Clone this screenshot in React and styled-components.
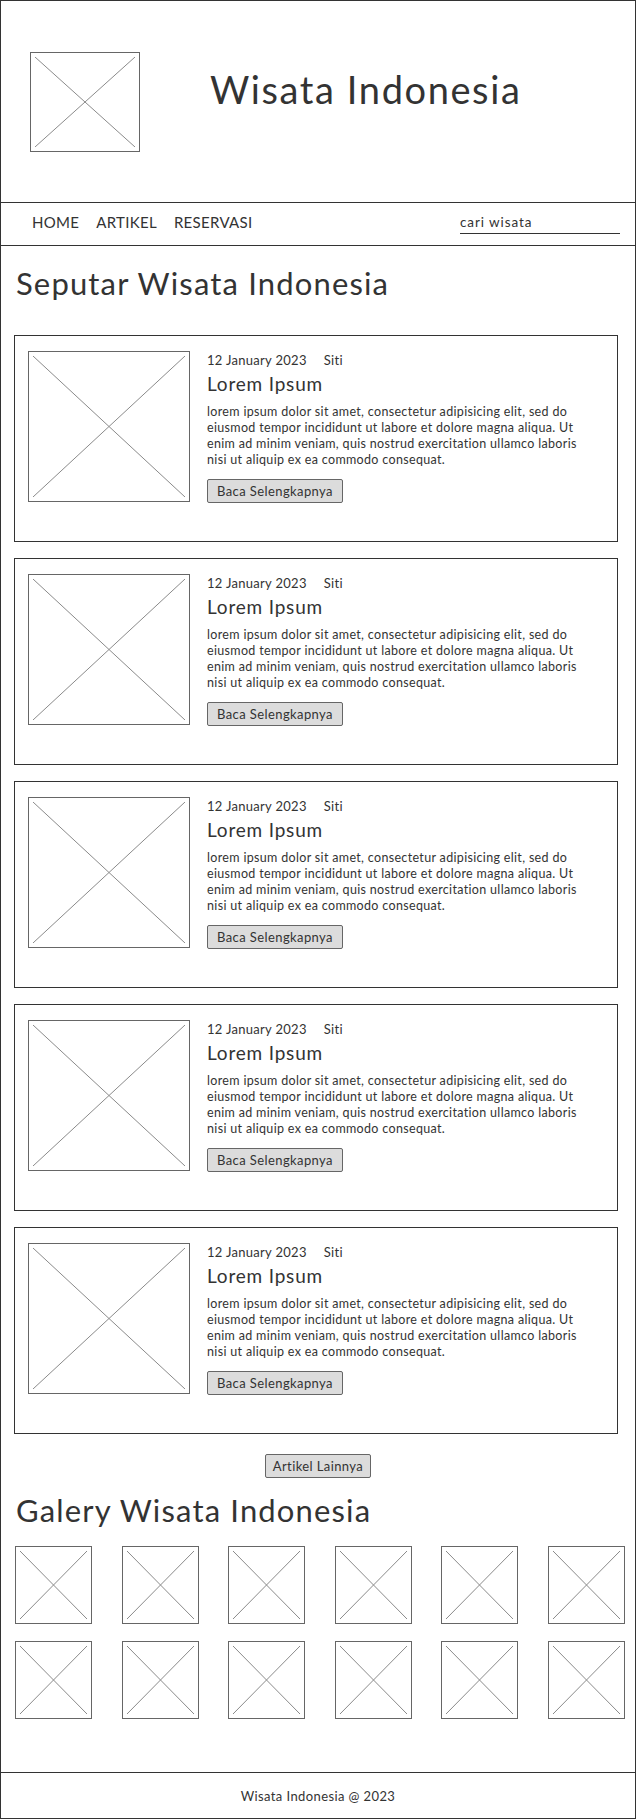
import React from "react";
import styled, { createGlobalStyle } from "styled-components";

const GlobalStyle = createGlobalStyle`
  html, body { margin: 0; padding: 0; background: #fff; }
  body { font-family: Lato, "Open Sans", sans-serif; color: #333; }
  * { box-sizing: border-box; }
`;

const Page = styled.div`
  width: 636px;
  min-height: 1819px;
  border: 1px solid #333;
  display: flex;
  flex-direction: column;
`;

const PlaceholderBox = styled.div`
  width: ${(p) => p.$w}px;
  height: ${(p) => p.$h}px;
  flex: none;
  border: 1px solid #666;
  padding: ${(p) => p.$inset ?? 4}px;
  background: #fff;
  svg { display: block; width: 100%; height: 100%; }
`;

const Placeholder = ({ w, h, inset }) => (
  <PlaceholderBox $w={w} $h={h} $inset={inset}>
    <svg viewBox="0 0 100 100" preserveAspectRatio="none">
      <line x1="0" y1="0" x2="100" y2="100" stroke="#8a8a8a" strokeWidth="1" vectorEffect="non-scaling-stroke" />
      <line x1="100" y1="0" x2="0" y2="100" stroke="#8a8a8a" strokeWidth="1" vectorEffect="non-scaling-stroke" />
    </svg>
  </PlaceholderBox>
);

const Header = styled.header`
  height: 202px;
  border-bottom: 1px solid #333;
  display: flex;
  align-items: center;
  padding-left: 29px;
`;

const SiteTitle = styled.h1`
  margin: 0 0 24px 70px;
  font-size: 38px;
  font-weight: 400;
  line-height: 1.2;
  letter-spacing: 1.6px;
  color: #333;
`;

const Nav = styled.nav`
  height: 43px;
  border-bottom: 1px solid #333;
  display: flex;
  align-items: center;
  justify-content: space-between;
  padding: 0 15px 4px 31px;
`;

const NavLinks = styled.div`
  display: flex;
  gap: 17px;
`;

const NavLink = styled.a`
  font-size: 15px;
  line-height: 1.2;
  letter-spacing: 0.3px;
  color: #333;
  text-decoration: none;
`;

const Search = styled.div`
  width: 160px;
  font-size: 13.5px;
  line-height: 16px;
  letter-spacing: 0.9px;
  padding: 4px 0 3px;
  border-bottom: 1px solid #333;
  color: #333;
`;

const Main = styled.main`
  padding: 0 17px 0 13px;
  display: flex;
  flex-direction: column;
`;

const SectionTitle = styled.h2`
  margin: ${(p) => p.$mt}px 0 ${(p) => p.$mb}px 2px;
  font-size: 31px;
  font-weight: 400;
  line-height: 37px;
  letter-spacing: 1.15px;
  color: #333;
`;

const CardList = styled.div`
  display: flex;
  flex-direction: column;
  gap: 16px;
`;

const Card = styled.article`
  height: 207px;
  border: 1px solid #333;
  padding: 15px 13px;
  display: flex;
  gap: 17px;
`;

const CardBody = styled.div`
  display: flex;
  flex-direction: column;
  align-items: flex-start;
`;

const Meta = styled.div`
  margin-top: 1px;
  font-size: 13px;
  line-height: 16px;
  letter-spacing: 0.3px;
  display: flex;
  gap: 17px;
`;

const CardTitle = styled.h3`
  margin: 5px 0 0;
  font-size: 19px;
  font-weight: 400;
  line-height: 22px;
  letter-spacing: 0.8px;
`;

const Excerpt = styled.p`
  margin: 9px 0 0;
  font-size: 12.5px;
  line-height: 16px;
  letter-spacing: 0.33px;
  white-space: nowrap;
`;

const Button = styled.button`
  height: 24px;
  width: ${(p) => p.$w}px;
  margin-top: ${(p) => p.$mt ?? 0}px;
  padding: 0;
  border: 1px solid #666;
  border-radius: 2px;
  background: #dcdcdc;
  font-family: inherit;
  font-size: 13px;
  letter-spacing: 0.4px;
  color: #333;
  cursor: pointer;
`;

const CenterRow = styled.div`
  display: flex;
  justify-content: center;
  margin-top: 20px;
  padding-left: 4px;
`;

const Gallery = styled.div`
  width: 610px;
  margin-left: 1px;
  display: grid;
  grid-template-columns: repeat(6, 77px);
  justify-content: space-between;
  row-gap: 17px;
`;

const Footer = styled.footer`
  margin-top: auto;
  height: 46px;
  border-top: 1px solid #333;
  display: flex;
  align-items: center;
  justify-content: center;
  font-size: 13px;
  letter-spacing: 0.4px;
  color: #333;
`;

const Spacer = styled.div`
  height: 52px;
`;

const excerptLines = [
  "lorem ipsum dolor sit amet, consectetur adipisicing elit, sed do",
  "eiusmod tempor incididunt ut labore et dolore magna aliqua. Ut",
  "enim ad minim veniam, quis nostrud exercitation ullamco laboris",
  "nisi ut aliquip ex ea commodo consequat.",
];

const ArticleCard = () => (
  <Card>
    <Placeholder w={162} h={151} inset={4} />
    <CardBody>
      <Meta>
        <span>12 January 2023</span>
        <span>Siti</span>
      </Meta>
      <CardTitle>Lorem Ipsum</CardTitle>
      <Excerpt>
        {excerptLines.map((l, i) => (
          <React.Fragment key={i}>
            {l}
            {i < excerptLines.length - 1 && <br />}
          </React.Fragment>
        ))}
      </Excerpt>
      <Button $w={136} $mt={11}>Baca Selengkapnya</Button>
    </CardBody>
  </Card>
);

export default function App() {
  return (
    <>
      <GlobalStyle />
      <Page>
        <Header>
          <Placeholder w={110} h={100} inset={4} />
          <SiteTitle>Wisata Indonesia</SiteTitle>
        </Header>
        <Nav>
          <NavLinks>
            <NavLink href="#">HOME</NavLink>
            <NavLink href="#">ARTIKEL</NavLink>
            <NavLink href="#">RESERVASI</NavLink>
          </NavLinks>
          <Search>cari wisata</Search>
        </Nav>
        <Main>
          <SectionTitle $mt={19} $mb={33}>Seputar Wisata Indonesia</SectionTitle>
          <CardList>
            {[0, 1, 2, 3, 4].map((i) => (
              <ArticleCard key={i} />
            ))}
          </CardList>
          <CenterRow>
            <Button $w={106}>Artikel Lainnya</Button>
          </CenterRow>
          <SectionTitle $mt={14} $mb={17}>Galery Wisata Indonesia</SectionTitle>
          <Gallery>
            {Array.from({ length: 12 }).map((_, i) => (
              <Placeholder key={i} w={77} h={78} inset={4} />
            ))}
          </Gallery>
          <Spacer />
        </Main>
        <Footer>Wisata Indonesia @ 2023</Footer>
      </Page>
    </>
  );
}
